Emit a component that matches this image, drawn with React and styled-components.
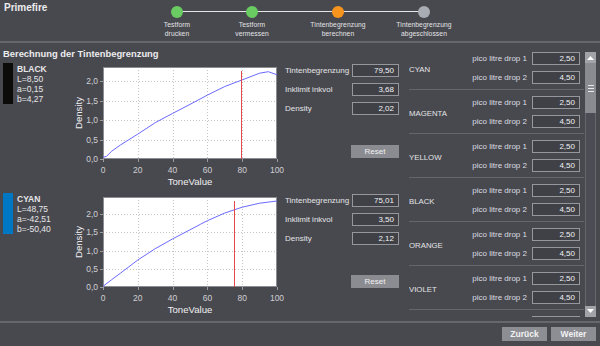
import React from "react";
import styled, { createGlobalStyle } from "styled-components";

const GlobalStyle = createGlobalStyle`
  html, body {
    margin: 0;
    padding: 0;
    background: #48494f;
  }
  body {
    font-family: "Liberation Sans", Arial, sans-serif;
  }
`;

const steps = [
  { lines: ["Testform", "drucken"], color: "#6bcb63", width: 74 },
  { lines: ["Testform", "vermessen"], color: "#6bcb63", width: 76 },
  { lines: ["Tintenbegrenzung", "berechnen"], color: "#f7941d", width: 96 },
  { lines: ["Tintenbegrenzung", "abgeschlossen"], color: "#a9acb3", width: 76 },
];

const inks = [
  {
    name: "BLACK",
    swatch: "#0d0b09",
    lab: ["L=8,50", "a=0,15", "b=4,27"],
    fields: ["79,50", "3,68", "2,02"],
    marker: 79.5,
    yMax: 2.36,
    plotH: 92,
    curve: [
      [0, 0.04], [2, 0.07], [5, 0.2], [10, 0.36], [20, 0.64], [30, 0.93],
      [40, 1.17], [50, 1.4], [60, 1.64], [70, 1.86], [80, 2.03], [90, 2.2],
      [95, 2.24], [100, 2.16],
    ],
  },
  {
    name: "CYAN",
    swatch: "#0077c2",
    lab: ["L=48,75", "a=-42,51", "b=-50,40"],
    fields: ["75,01", "3,50", "2,12"],
    marker: 75.01,
    yMax: 2.47,
    plotH: 90,
    curve: [
      [0, 0.02], [5, 0.2], [10, 0.38], [20, 0.74], [30, 1.05], [40, 1.32],
      [50, 1.57], [56, 1.72], [60, 1.82], [70, 2.03], [80, 2.19], [90, 2.3],
      [100, 2.36],
    ],
  },
];

const channels = ["CYAN", "MAGENTA", "YELLOW", "BLACK", "ORANGE", "VIOLET"];

const fieldLabels = ["Tintenbegrenzung", "Inklimit inkvol", "Density"];

function Chart({ curve, marker, yMax, plotH }) {
  const x0 = 33;
  const x1 = 207;
  const y0 = 4;
  const y1 = y0 + plotH;
  const sx = (v) => x0 + (v / 100) * (x1 - x0);
  const sy = (d) => y1 - (d / yMax) * plotH;
  const px = (v) => Math.round(v) + 0.5;
  const yTicks = [0, 0.5, 1, 1.5, 2];
  const xTicks = [0, 20, 40, 60, 80, 100];
  const pts = curve.map(([t, d]) => `${sx(t).toFixed(1)},${sy(d).toFixed(1)}`).join(" ");

  return (
    <ChartSvg width={215} height={124} viewBox="0 0 215 124">
      <rect x={x0} y={y0} width={x1 - x0} height={plotH} fill="#ffffff" />
      {xTicks.slice(1, -1).map((t) => (
        <line key={t} x1={px(sx(t))} x2={px(sx(t))} y1={y0} y2={y1} stroke="#c4c4c4" strokeDasharray="1 2" />
      ))}
      {yTicks.slice(1).map((t) => (
        <line key={t} x1={x0} x2={x1} y1={px(sy(t))} y2={px(sy(t))} stroke="#c4c4c4" strokeDasharray="1 2" />
      ))}
      <rect x={x0 + 0.5} y={y0 + 0.5} width={x1 - x0 - 1} height={plotH - 1} fill="none" stroke="#8c8d92" />
      <polyline points={pts} fill="none" stroke="#6a6aff" strokeWidth="1" />
      <line x1={px(sx(marker))} x2={px(sx(marker))} y1={y0 + 4} y2={y1} stroke="#e4484a" strokeWidth="1" />
      {yTicks.map((t) => (
        <g key={t}>
          <line x1={x0 - 3} x2={x0} y1={px(sy(t))} y2={px(sy(t))} stroke="#9a9ba0" />
          <text x={x0 - 5} y={sy(t) + 3} textAnchor="end" className="tick">
            {t.toFixed(1).replace(".", ",")}
          </text>
        </g>
      ))}
      {xTicks.map((t) => (
        <g key={t}>
          <line x1={px(sx(t))} x2={px(sx(t))} y1={y1} y2={y1 + 3} stroke="#9a9ba0" />
          <text x={sx(t)} y={y1 + 14} textAnchor="middle" className="tick">
            {t}
          </text>
        </g>
      ))}
      <text x={(x0 + x1) / 2} y={y1 + 26} textAnchor="middle" className="title">
        ToneValue
      </text>
      <text x={12} y={y0 + plotH / 2} textAnchor="middle" className="title" transform={`rotate(-90 12 ${y0 + plotH / 2})`}>
        Density
      </text>
    </ChartSvg>
  );
}

function ScrollTriangle({ down }) {
  return (
    <svg width="7" height="5" viewBox="0 0 7 5">
      <polygon points={down ? "0,0 7,0 3.5,4" : "0,5 7,5 3.5,1"} fill="#ffffff" />
    </svg>
  );
}

export default function App() {
  return (
    <>
      <GlobalStyle />
      <Frame>
        <Header>
          <Brand>Primefire</Brand>
          <Stepper>
            {steps.map((s, i) => (
              <Step key={i} $width={s.width} $first={i === 0} $last={i === steps.length - 1}>
                <Dot $color={s.color} />
                <StepLabel>
                  {s.lines[0]}
                  <br />
                  {s.lines[1]}
                </StepLabel>
              </Step>
            ))}
          </Stepper>
        </Header>

        <Main>
          <LeftCol>
            <Title>Berechnung der Tintenbegrenzung</Title>
            {inks.map((ink) => (
              <Block key={ink.name}>
                <Swatch $color={ink.swatch} />
                <LabInfo>
                  <strong>{ink.name}</strong>
                  {ink.lab.map((l) => (
                    <span key={l}>{l}</span>
                  ))}
                </LabInfo>
                <Chart curve={ink.curve} marker={ink.marker} yMax={ink.yMax} plotH={ink.plotH} />
                <Fields>
                  {fieldLabels.map((label, i) => (
                    <FieldRow key={label}>
                      <FieldLabel>{label}</FieldLabel>
                      <ValueBox $width={47}>{ink.fields[i]}</ValueBox>
                    </FieldRow>
                  ))}
                  <ResetButton>Reset</ResetButton>
                </Fields>
              </Block>
            ))}
          </LeftCol>

          <RightCol>
            <ChannelList>
              {channels.map((c) => (
                <Channel key={c}>
                  <ChannelName>{c}</ChannelName>
                  <DropRows>
                    <DropRow>
                      <DropLabel>pico litre drop 1</DropLabel>
                      <ValueBox $width={48}>2,50</ValueBox>
                    </DropRow>
                    <DropRow>
                      <DropLabel>pico litre drop 2</DropLabel>
                      <ValueBox $width={48}>4,50</ValueBox>
                    </DropRow>
                  </DropRows>
                </Channel>
              ))}
              <PeekRow>
                <ValueBox $width={48} />
              </PeekRow>
            </ChannelList>
            <ScrollBar>
              <ScrollButton>
                <ScrollTriangle />
              </ScrollButton>
              <Track>
                <Thumb>
                  <Grip />
                  <Grip />
                  <Grip />
                </Thumb>
              </Track>
              <ScrollButton>
                <ScrollTriangle down />
              </ScrollButton>
            </ScrollBar>
          </RightCol>
        </Main>

        <Footer>
          <NavButton>Zurück</NavButton>
          <NavButton>Weiter</NavButton>
        </Footer>
      </Frame>
    </>
  );
}

const Frame = styled.div`
  width: 600px;
  height: 346px;
  overflow: hidden;
  background: #48494f;
  display: flex;
  flex-direction: column;
  color: #e8e8ea;
`;

const Header = styled.div`
  height: 41px;
  flex-shrink: 0;
  display: flex;
  align-items: flex-start;
  border-bottom: 2px solid #66676d;
`;

const Brand = styled.div`
  flex: 0 0 136px;
  padding: 2px 0 0 4px;
  font-size: 10px;
  font-weight: bold;
  line-height: 12px;
  color: #ececee;
`;

const Stepper = styled.div`
  display: flex;
  margin-top: 6px;
`;

const Step = styled.div`
  position: relative;
  width: ${(p) => p.$width}px;
  display: flex;
  flex-direction: column;
  align-items: center;

  &::before,
  &::after {
    content: "";
    position: absolute;
    top: 5px;
    height: 1px;
    background: #e6e6e8;
    width: 50%;
  }
  &::before {
    left: 0;
    display: ${(p) => (p.$first ? "none" : "block")};
  }
  &::after {
    right: 0;
    display: ${(p) => (p.$last ? "none" : "block")};
  }
`;

const Dot = styled.div`
  position: relative;
  z-index: 1;
  width: 12px;
  height: 12px;
  border-radius: 50%;
  background: ${(p) => p.$color};
`;

const StepLabel = styled.div`
  margin-top: 2px;
  font-size: 6.7px;
  line-height: 9px;
  letter-spacing: 0.1px;
  text-align: center;
  color: #e4e4e6;
  white-space: nowrap;
`;

const Main = styled.div`
  height: 278px;
  flex-shrink: 0;
  display: flex;
`;

const LeftCol = styled.div`
  flex: 0 0 409px;
  display: flex;
  flex-direction: column;
  padding-top: 5px;
  overflow: hidden;
`;

const Title = styled.div`
  padding-left: 3px;
  font-size: 9.4px;
  font-weight: bold;
  line-height: 11px;
  color: #ececee;
  margin-bottom: 4px;
`;

const Block = styled.div`
  flex-shrink: 0;
  height: 130px;
  display: flex;
  align-items: flex-start;
  padding-left: 3px;
`;

const Swatch = styled.div`
  flex: 0 0 10px;
  height: 41px;
  background: ${(p) => p.$color};
`;

const LabInfo = styled.div`
  flex: 0 0 53px;
  margin-left: 4px;
  padding-top: 1px;
  display: flex;
  flex-direction: column;
  font-size: 8.5px;
  line-height: 10px;
  color: #e6e6e8;

  strong {
    font-weight: bold;
  }
`;

const ChartSvg = styled.svg`
  display: block;
  flex-shrink: 0;

  text {
    font-family: "Liberation Sans", Arial, sans-serif;
  }
  .tick {
    font-size: 8.5px;
    fill: #cfcfd3;
  }
  .title {
    font-size: 9.6px;
    fill: #f0f0f2;
  }
`;

const Fields = styled.div`
  width: 114px;
  margin-top: 1px;
  display: flex;
  flex-direction: column;
  gap: 6px;
`;

const FieldRow = styled.div`
  height: 13px;
  display: flex;
  align-items: center;
  justify-content: space-between;
`;

const FieldLabel = styled.span`
  font-size: 8px;
  color: #e4e4e6;
`;

const ValueBox = styled.div`
  box-sizing: border-box;
  flex-shrink: 0;
  width: ${(p) => p.$width}px;
  height: 13px;
  border: 1px solid #96979c;
  background: #404147;
  color: #f2f2f4;
  font-size: 8px;
  line-height: 11px;
  text-align: right;
  padding-right: 4px;
`;

const ResetButton = styled.div`
  align-self: flex-end;
  margin-top: 24px;
  width: 48px;
  height: 13px;
  background: #8b8c91;
  color: #f0f0f2;
  font-size: 8px;
  line-height: 13px;
  text-align: center;
`;

const RightCol = styled.div`
  flex: 1;
  display: flex;
  align-items: flex-start;
`;

const ChannelList = styled.div`
  width: 175px;
  height: 271px;
  margin-top: 3px;
  overflow: hidden;
`;

const Channel = styled.div`
  display: flex;
  align-items: center;
  padding: 6px 4px 5px 0;
  border-bottom: 1px solid #65666c;
`;

const ChannelName = styled.div`
  flex: 1;
  font-size: 7.8px;
  color: #e4e4e6;
  padding-top: 3px;
`;

const DropRows = styled.div`
  display: flex;
  flex-direction: column;
  gap: 6px;
`;

const DropRow = styled.div`
  display: flex;
  align-items: center;
  gap: 5px;
  height: 13px;
`;

const PeekRow = styled.div`
  display: flex;
  justify-content: flex-end;
  padding: 6px 4px 0 0;
`;

const DropLabel = styled.span`
  font-size: 8px;
  color: #dcdde2;
`;

const ScrollBar = styled.div`
  width: 11px;
  height: 265px;
  margin: 9px 0 0 1px;
  display: flex;
  flex-direction: column;
`;

const ScrollButton = styled.div`
  height: 11px;
  flex-shrink: 0;
  background: #a2a3a8;
  display: flex;
  align-items: center;
  justify-content: center;
`;

const Track = styled.div`
  flex: 1;
  box-sizing: border-box;
  background: #4c4d54;
  border-left: 1px solid #66676d;
  border-right: 1px solid #66676d;
`;

const Thumb = styled.div`
  height: 50px;
  margin: 0 -1px;
  background: #8a8b90;
  display: flex;
  flex-direction: column;
  align-items: center;
  justify-content: center;
  gap: 2px;
`;

const Grip = styled.div`
  width: 6px;
  height: 1px;
  background: #e8e8ea;
`;

const Footer = styled.div`
  flex: 1;
  border-top: 2px solid #66676d;
  display: flex;
  justify-content: flex-end;
  align-items: flex-start;
  gap: 4px;
  padding: 4px 4px 0 0;
`;

const NavButton = styled.div`
  width: 45px;
  height: 14px;
  background: #8d8e93;
  color: #f2f2f4;
  font-size: 8.5px;
  font-weight: bold;
  line-height: 14px;
  text-align: center;
`;
